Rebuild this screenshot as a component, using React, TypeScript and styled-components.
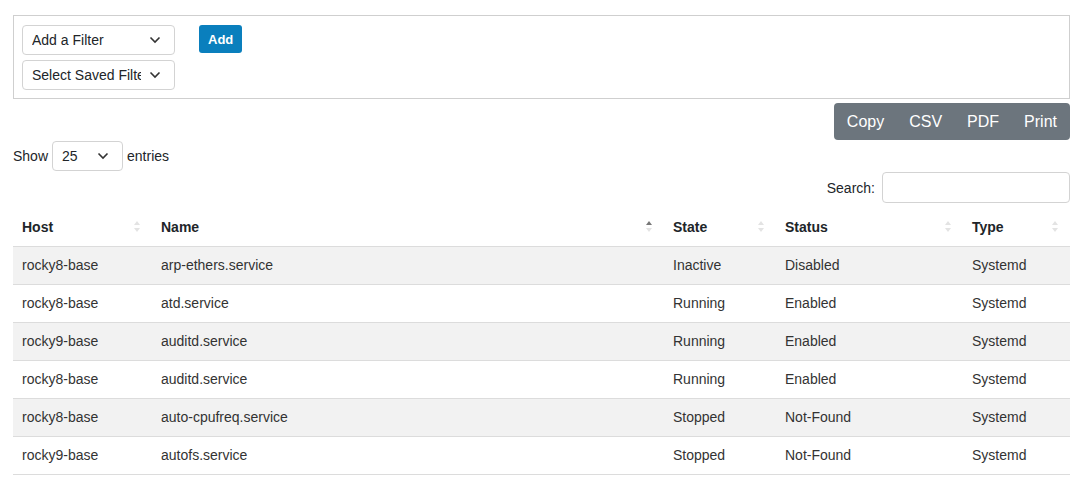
import React from 'react';
import styled, { createGlobalStyle } from 'styled-components';

const Global = createGlobalStyle`
  body {
    margin: 0;
    font-family: "Liberation Sans", Arial, sans-serif;
    font-size: 14px;
    color: #212529;
    background: #fff;
  }
`;

const Page = styled.div`
  padding: 15px 18px 0 13px;
`;

const FilterBox = styled.div`
  border: 1px solid #cfcfcf;
  height: 84px;
  box-sizing: border-box;
  padding: 9px 8px;
  display: flex;
  gap: 24px;
  align-items: flex-start;
`;

const SelectStack = styled.div`
  display: flex;
  flex-direction: column;
  gap: 5px;
`;

const SelectBox = styled.div<{ w: number }>`
  width: ${(p) => p.w}px;
  height: 30px;
  box-sizing: border-box;
  border: 1px solid #d3d3d3;
  border-radius: 4px;
  display: flex;
  align-items: center;
  padding: 0 13px 0 9px;
  font-size: 14px;
  color: #212529;
  background: #fff;
`;

const SelectText = styled.span`
  flex: 1;
  white-space: nowrap;
  overflow: hidden;
  margin-right: 8px;
`;

const AddButton = styled.button`
  height: 28px;
  padding: 0 9px;
  border: none;
  border-radius: 3px;
  background: #0a7fbd;
  color: #fff;
  font-family: inherit;
  font-weight: bold;
  font-size: 13px;
`;

const ButtonBar = styled.div`
  display: flex;
  justify-content: flex-end;
  margin-top: 4px;
`;

const ButtonGroup = styled.div`
  display: flex;
  background: #6c757d;
  border-radius: 4px;
  height: 37px;
`;

const ExportButton = styled.div`
  color: #fff;
  font-size: 16px;
  display: flex;
  align-items: center;
  padding: 0 12.5px;
  &:first-child { padding-left: 13px; }
  &:last-child { padding-right: 13px; }
`;

const LengthRow = styled.div`
  display: flex;
  align-items: center;
  gap: 4px;
  margin-top: 1px;
`;

const SearchRow = styled.div`
  display: flex;
  justify-content: flex-end;
  align-items: center;
  gap: 7px;
  margin-top: 1px;
`;

const SearchInput = styled.div`
  width: 188px;
  height: 31px;
  box-sizing: border-box;
  border: 1px solid #d3d3d3;
  border-radius: 4px;
`;

const Table = styled.table`
  width: 100%;
  border-collapse: collapse;
  margin-top: 7px;
`;

const Th = styled.th<{ w: number }>`
  width: ${(p) => p.w}px;
  text-align: left;
  font-weight: bold;
  height: 36px;
  padding: 0 9px 1px;
  border-bottom: 1px solid #dcdcdc;
  position: relative;
  box-sizing: border-box;
`;

const SortIcon = styled.span`
  position: absolute;
  right: 12px;
  top: 11px;
  display: flex;
  flex-direction: column;
  gap: 3px;
`;

const Tri = styled.span<{ up?: boolean; active?: boolean }>`
  width: 0;
  height: 0;
  border-left: 3px solid transparent;
  border-right: 3px solid transparent;
  ${(p) =>
    p.up
      ? `border-bottom: 4px solid ${p.active ? '#777' : '#e3e3e3'};`
      : `border-top: 4px solid #e3e3e3;`}
`;

const Tr = styled.tr<{ striped: boolean }>`
  background: ${(p) => (p.striped ? '#f2f2f2' : '#fff')};
`;

const Td = styled.td`
  height: 37px;
  padding: 0 9px;
  border-bottom: 1px solid #dcdcdc;
  color: #333;
`;

const Chevron = () => (
  <svg width="12" height="8" viewBox="0 0 12 8">
    <path d="M1.5 1.5 6 6l4.5-4.5" fill="none" stroke="#333" strokeWidth="1.6" />
  </svg>
);

const cols = [
  { label: 'Host', w: 139 },
  { label: 'Name', w: 512 },
  { label: 'State', w: 112 },
  { label: 'Status', w: 187 },
  { label: 'Type', w: 107 },
];

const rows = [
  ['rocky8-base', 'arp-ethers.service', 'Inactive', 'Disabled', 'Systemd'],
  ['rocky8-base', 'atd.service', 'Running', 'Enabled', 'Systemd'],
  ['rocky9-base', 'auditd.service', 'Running', 'Enabled', 'Systemd'],
  ['rocky8-base', 'auditd.service', 'Running', 'Enabled', 'Systemd'],
  ['rocky8-base', 'auto-cpufreq.service', 'Stopped', 'Not-Found', 'Systemd'],
  ['rocky9-base', 'autofs.service', 'Stopped', 'Not-Found', 'Systemd'],
];

export default function App() {
  return (
    <Page>
      <Global />
      <FilterBox>
        <SelectStack>
          <SelectBox w={153}>
            <SelectText>Add a Filter</SelectText>
            <Chevron />
          </SelectBox>
          <SelectBox w={153}>
            <SelectText>Select Saved Filters</SelectText>
            <Chevron />
          </SelectBox>
        </SelectStack>
        <AddButton>Add</AddButton>
      </FilterBox>
      <ButtonBar>
        <ButtonGroup>
          {['Copy', 'CSV', 'PDF', 'Print'].map((b) => (
            <ExportButton key={b}>{b}</ExportButton>
          ))}
        </ButtonGroup>
      </ButtonBar>
      <LengthRow>
        Show
        <SelectBox w={71}>
          <SelectText>25</SelectText>
          <Chevron />
        </SelectBox>
        entries
      </LengthRow>
      <SearchRow>
        Search:
        <SearchInput />
      </SearchRow>
      <Table>
        <thead>
          <tr>
            {cols.map((c) => (
              <Th key={c.label} w={c.w}>
                {c.label}
                <SortIcon>
                  <Tri up active={c.label === 'Name'} />
                  <Tri />
                </SortIcon>
              </Th>
            ))}
          </tr>
        </thead>
        <tbody>
          {rows.map((r, i) => (
            <Tr key={i} striped={i % 2 === 0}>
              {r.map((v, j) => (
                <Td key={j}>{v}</Td>
              ))}
            </Tr>
          ))}
        </tbody>
      </Table>
    </Page>
  );
}
